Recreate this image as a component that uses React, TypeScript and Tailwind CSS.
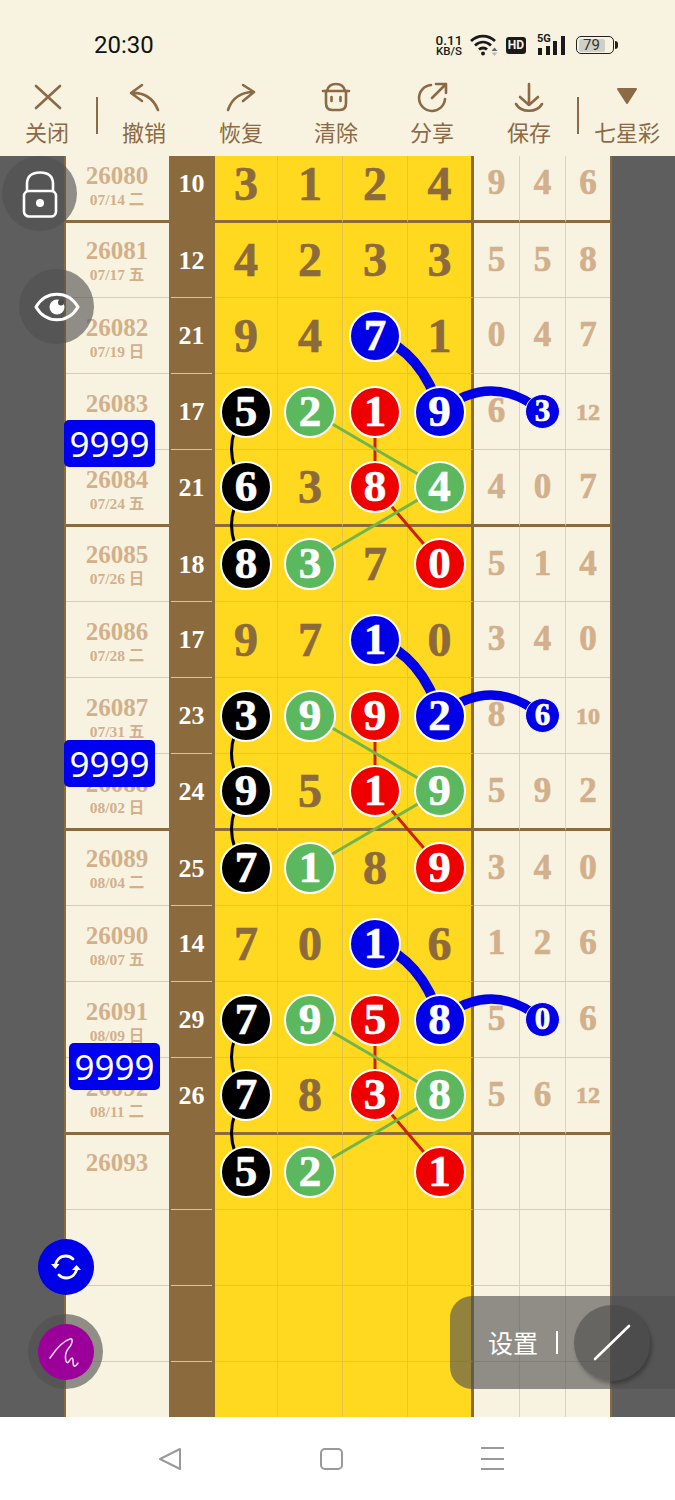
import React from "react";

type Cell = number | string | null;
type Row = { id: string; date: string; sum: string; main: Cell[]; side: Cell[] };

const rows: Row[] = [
  { id: "26080", date: "07/14 二", sum: "10", main: [3, 1, 2, 4], side: [9, 4, 6] },
  { id: "26081", date: "07/17 五", sum: "12", main: [4, 2, 3, 3], side: [5, 5, 8] },
  { id: "26082", date: "07/19 日", sum: "21", main: [9, 4, "b7", 1], side: [0, 4, 7] },
  { id: "26083", date: "", sum: "17", main: ["k5", "g2", "r1", "b9"], side: [6, "b3", 12] },
  { id: "26084", date: "07/24 五", sum: "21", main: ["k6", 3, "r8", "g4"], side: [4, 0, 7] },
  { id: "26085", date: "07/26 日", sum: "18", main: ["k8", "g3", 7, "r0"], side: [5, 1, 4] },
  { id: "26086", date: "07/28 二", sum: "17", main: [9, 7, "b1", 0], side: [3, 4, 0] },
  { id: "26087", date: "07/31 五", sum: "23", main: ["k3", "g9", "r9", "b2"], side: [8, "b6", 10] },
  { id: "26088", date: "08/02 日", sum: "24", main: ["k9", 5, "r1", "g9"], side: [5, 9, 2] },
  { id: "26089", date: "08/04 二", sum: "25", main: ["k7", "g1", 8, "r9"], side: [3, 4, 0] },
  { id: "26090", date: "08/07 五", sum: "14", main: [7, 0, "b1", 6], side: [1, 2, 6] },
  { id: "26091", date: "08/09 日", sum: "29", main: ["k7", "g9", "r5", "b8"], side: [5, "b0", 6] },
  { id: "26092", date: "08/11 二", sum: "26", main: ["k7", 8, "r3", "g8"], side: [5, 6, 12] },
  { id: "26093", date: "", sum: "", main: ["k5", "g2", null, "r1"], side: [null, null, null] },
  { id: "", date: "", sum: "", main: [null, null, null, null], side: [null, null, null] },
  { id: "", date: "", sum: "", main: [null, null, null, null], side: [null, null, null] },
  { id: "", date: "", sum: "", main: [null, null, null, null], side: [null, null, null] },
  { id: "", date: "", sum: "", main: [null, null, null, null], side: [null, null, null] },
];

const serif = "font-['Liberation_Serif','Noto_Sans_CJK_SC',serif] font-bold";
const heavy = "[-webkit-text-stroke:0.7px_currentColor]";

function ballColor(c: string) {
  if (c === "b") return "bg-[#0000e6]";
  if (c === "r") return "bg-[#ee0000]";
  if (c === "g") return "bg-[#5cb85f]";
  return "bg-black";
}

function Ball({ v, small }: { v: string; small?: boolean }) {
  return (
    <div
      className={`relative z-10 flex shrink-0 items-center justify-center rounded-full border-white text-white ${serif} ${heavy} ${ballColor(v[0])} ${
        small ? "h-[35px] w-[35px] border-[1.5px] text-[31px]" : "h-[52px] w-[52px] border-[2.5px] text-[45px]"
      }`}
    >
      {v.slice(1)}
    </div>
  );
}

function MainCell({ v, thick, last }: { v: Cell; thick: boolean; last: boolean }) {
  const bottom = thick ? "border-b-[3px] border-b-[#8b6a3d]" : "border-b border-b-[#e6c24a]";
  const right = last ? "border-r-[3px] border-r-[#8b6a3d]" : "border-r border-r-[#e6c24a]";
  return (
    <div className={`flex items-center justify-center bg-[#ffd820] text-[48px] text-[#8b6a3d] ${serif} ${heavy} ${bottom} ${right}`}>
      {typeof v === "string" ? <Ball v={v} /> : v}
    </div>
  );
}

function SideCell({ v, thick, last }: { v: Cell; thick: boolean; last: boolean }) {
  const big = typeof v === "number" && v > 9;
  const bottom = thick ? "border-b-[3px] border-b-[#8b6a3d]" : "border-b border-b-[#e0caa8]";
  return (
    <div
      className={`flex items-center justify-center bg-[#f8f3e0] text-[#d2b08c] ${serif} ${heavy} ${bottom} ${last ? "" : "border-r border-r-[#e3d0b4]"} ${
        big ? "text-[24px]" : "text-[35px]"
      }`}
    >
      {typeof v === "string" ? <Ball v={v} small /> : v}
    </div>
  );
}

function TableRow({ r, thick, h, pad }: { r: Row; thick: boolean; h: string; pad: string }) {
  const b = thick ? "border-b-[3px] border-b-[#8b6a3d]" : "border-b border-b-[#e0caa8]";
  return (
    <div className={`grid shrink-0 grid-cols-[103px_46px_63px_65px_65px_66px_46px_46px_44px] ${h}`}>
      <div className={`flex flex-col items-center bg-[#f8f3e0] pr-[1px] text-[#d2b08c] ${serif} ${b} ${pad}`}>
        <div className="text-[25px] leading-[28px]">{r.id}</div>
        <div className="text-[15.5px] leading-[20px]">{r.date}</div>
      </div>
      <div className="bg-[#8b6a3d] pl-[2px] pr-[3px]">
        <div
          className={`flex h-full items-center justify-center text-[26px] text-white ${serif} ${
            thick ? "pb-[3px]" : "border-b border-b-[#d8c3a3]"
          }`}
        >
          {r.sum}
        </div>
      </div>
      {r.main.map((v, i) => (
        <MainCell key={i} v={v} thick={thick} last={i === 3} />
      ))}
      {r.side.map((v, i) => (
        <SideCell key={i} v={v} thick={thick} last={i === 2} />
      ))}
    </div>
  );
}

function Links() {
  const groups = [0, 304, 608];
  return (
    <svg className="absolute left-0 top-0 z-[5] h-[1261px] w-[675px]" viewBox="0 156 675 1261" fill="none">
      {groups.map((o) => (
        <g key={o} transform={`translate(0 ${o})`}>
          <path d="M375 335Q422 352 440 411" stroke="#0000e6" strokeWidth="10" />
          <path d="M440 411Q492 371 541 411" stroke="#0000e6" strokeWidth="9" />
          <path d="M245 411Q218 449 245 487Q218 525 245 563" stroke="#000" strokeWidth="3" />
          <path d="M375 411V487L440 563" stroke="#cc2200" strokeWidth="3" />
          <path d="M310 411L440 487L310 563" stroke="#74b54a" strokeWidth="3" />
        </g>
      ))}
    </svg>
  );
}

const ic = "#8b6a45";

function ToolIcon({ name }: { name: string }) {
  const common = { width: 40, height: 40, viewBox: "0 0 40 40", fill: "none", stroke: ic, strokeWidth: 2.6, strokeLinecap: "round" as const, strokeLinejoin: "round" as const };
  if (name === "close")
    return (
      <svg {...common}>
        <path d="M9 9L33 31M33 9L9 31" />
      </svg>
    );
  if (name === "undo")
    return (
      <svg {...common}>
        <path d="M18 8L7 16L18 24M7 16C18 15 29 20 34 33" />
      </svg>
    );
  if (name === "redo")
    return (
      <svg {...common}>
        <path d="M22 8L33 15L22 24M7 33C11 21 20 15 33 15" />
      </svg>
    );
  if (name === "clear")
    return (
      <svg {...common}>
        <path d="M11 14C12 9 15 7 20 7C25 7 28 9 29 14" />
        <path d="M7 14H33" />
        <path d="M10 14V26C10 31 12 33 16 33H24C28 33 30 31 30 26V14" />
        <path d="M15.5 20V24M24.5 20V24" />
      </svg>
    );
  if (name === "share")
    return (
      <svg {...common}>
        <path d="M19 8A13 13 0 1 0 33 22" />
        <path d="M20 21L34 7M24 7H34V16" />
      </svg>
    );
  if (name === "save")
    return (
      <svg {...common}>
        <path d="M20 7V28M11 20L20 28L29 20" />
        <path d="M7 27C12 36 28 36 33 27" />
      </svg>
    );
  return (
    <svg width="40" height="40" viewBox="0 0 40 40">
      <path d="M11 12H29L20 26Z" fill={ic} stroke={ic} strokeWidth="2" strokeLinejoin="round" />
    </svg>
  );
}

function Tool({ name, label, w }: { name: string; label: string; w: string }) {
  return (
    <div className={`flex shrink-0 flex-col items-center ${w}`}>
      <ToolIcon name={name} />
      <div className="mt-[-1px] whitespace-nowrap text-[22px] leading-[30px] text-[#8b6a45]">{label}</div>
    </div>
  );
}

function Sep() {
  return <div className="mt-[20px] h-[37px] w-[2px] shrink-0 bg-[#8b6a45]" />;
}

function StatusBar() {
  return (
    <div className="flex h-[77px] items-center bg-[#f8f3e0] pl-[94px] pr-[57px] pt-[13px]">
      <div className="font-['Roboto',sans-serif] text-[24px] leading-[30px] text-[#111]">20:30</div>
      <div className="ml-auto flex items-center text-[#1a1a1a]">
        <div className="flex w-[26px] flex-col items-center font-['Roboto',sans-serif] font-medium">
          <span className="block text-[13.5px] leading-[12px]">0.11</span>
          <span className="block text-[11.5px] leading-[11px]">KB/S</span>
        </div>
        <svg className="ml-[8px]" width="28" height="22" viewBox="0 0 28 22" fill="none" stroke="#1a1a1a" strokeWidth="2.8">
          <path d="M1 7C8 0.5 18 0.5 25 7M5 11.5C10 7 16 7 21 11.5M9 15.5C11 13.5 15 13.5 17 15.5" />
          <circle cx="13" cy="19.5" r="2" fill="#1a1a1a" stroke="none" />
          <path d="M24.5 13.5L27.5 17H21.5Z" fill="#666" stroke="none" />
          <path d="M24.5 22L27.5 18.5H21.5Z" fill="#bbb" stroke="none" />
        </svg>
        <div className="ml-[8px] flex h-[17px] w-[20px] items-center justify-center rounded-[3px] bg-[#1a1a1a] font-['Roboto',sans-serif] text-[12px] font-bold leading-none text-[#f8f3e0]">
          HD
        </div>
        <div className="relative ml-[11px] flex h-[20px] w-[29px] items-end justify-between px-[1px]">
          <span className="absolute left-0 top-[-2px] font-['Roboto',sans-serif] text-[11px] font-bold leading-[11px]">5G</span>
          <i className="h-[7px] w-[4px] bg-[#1a1a1a]" />
          <i className="h-[9px] w-[4px] bg-[#1a1a1a]" />
          <i className="h-[14px] w-[4px] bg-[#1a1a1a]" />
          <i className="h-[19px] w-[4px] bg-[#1a1a1a]" />
        </div>
        <div className="ml-[10px] flex h-[18px] w-[38px] items-center rounded-[5px] border-[1.5px] border-[#222] p-[1.5px]">
          <div className="flex h-full w-[26px] items-center justify-center rounded-[2px] bg-[#d0cfc6] font-['Roboto',sans-serif] text-[15px] leading-none text-[#333]">
            79
          </div>
        </div>
        <div className="ml-[1px] h-[8px] w-[3px] rounded-r bg-[#222]" />
      </div>
    </div>
  );
}

function Toolbar() {
  return (
    <div className="flex h-[79px] items-start bg-[#f8f3e0] pl-[17px] font-['Noto_Sans_CJK_SC',sans-serif]">
      <Tool name="close" label="关闭" w="w-[60px]" />
      <div className="ml-[19px]">
        <Sep />
      </div>
      <div className="ml-[16px] flex">
        <Tool name="undo" label="撤销" w="w-[60px]" />
        <div className="w-[37px]" />
        <Tool name="redo" label="恢复" w="w-[60px]" />
        <div className="w-[35px]" />
        <Tool name="clear" label="清除" w="w-[60px]" />
        <div className="w-[36px]" />
        <Tool name="share" label="分享" w="w-[60px]" />
        <div className="w-[37px]" />
        <Tool name="save" label="保存" w="w-[60px]" />
      </div>
      <div className="ml-[18px]">
        <Sep />
      </div>
      <div className="ml-[14px]">
        <Tool name="tri" label="七星彩" w="w-[68px]" />
      </div>
    </div>
  );
}

function Badge({ className }: { className: string }) {
  return (
    <div
      className={`absolute z-20 flex h-[47px] w-[91px] items-center justify-center rounded-[5px] bg-[#0000f0] font-['Noto_Sans',sans-serif] text-[35px] leading-none text-white ${className}`}
    >
      9999
    </div>
  );
}

const glass = "bg-[rgba(80,80,80,0.63)]";

function Overlays() {
  return (
    <>
      <div className={`absolute left-[2px] top-[156px] z-30 flex h-[75px] w-[75px] items-center justify-center rounded-full ${glass}`}>
        <svg width="36" height="48" viewBox="0 0 36 48" fill="none" stroke="#fff" strokeWidth="2.6">
          <path d="M5 21V14C5 6 10 2.5 18 2.5C26 2.5 31 6 31 14V21" />
          <rect x="2" y="21" width="32" height="25.5" rx="5" />
          <circle cx="18" cy="33" r="4" fill="#fff" stroke="none" />
        </svg>
      </div>
      <div className={`absolute left-[19px] top-[269px] z-30 flex h-[75px] w-[75px] items-center justify-center rounded-full ${glass}`}>
        <svg width="46" height="32" viewBox="0 0 46 32" fill="none" stroke="#fff" strokeWidth="3">
          <path d="M2 16C12 -1 34 -1 44 16C34 33 12 33 2 16Z" />
          <circle cx="23" cy="16" r="7.5" fill="#fff" stroke="none" />
          <circle cx="27" cy="11.5" r="3" fill="#4a4a4a" stroke="none" />
        </svg>
      </div>
      <div className="absolute left-[38px] top-[1239px] z-30 flex h-[56px] w-[56px] items-center justify-center rounded-full bg-[#0000e6]">
        <svg width="32" height="28" viewBox="0 0 32 28" fill="none" stroke="#fff" strokeWidth="2.8" strokeLinecap="round">
          <path d="M5 13C6 7 10 3 16 3C19 3 21 4 23 6" />
          <path d="M27 15C26 21 22 25 16 25C13 25 11 24 9 22" />
          <path d="M1 11L5.5 16L9.5 11Z" fill="#fff" stroke="none" />
          <path d="M22 17L26.5 12L31 17Z" fill="#fff" stroke="none" />
        </svg>
      </div>
      <div className={`absolute left-[28px] top-[1314px] z-30 flex h-[75px] w-[75px] items-center justify-center rounded-full ${glass}`}>
        <div className="flex h-[56px] w-[56px] items-center justify-center rounded-full bg-[#9b009b]">
          <svg width="38" height="38" viewBox="0 0 38 38" fill="none" stroke="#f6d9f6" strokeWidth="1.6" strokeLinecap="round" strokeLinejoin="round">
            <path d="M3 25C9 16 16 8 23 6C27 5 25 12 21 16C18 20 18 24 19 28C21 33 23 25 25 25C27 25 25 31 27 33C29 34 30 31 31 30" />
          </svg>
        </div>
      </div>
      <div className={`absolute left-[450px] top-[1296px] z-30 flex h-[93px] w-[225px] items-center rounded-l-[22px] ${glass}`}>
        <div className="ml-[38px] font-['Noto_Sans_CJK_SC',sans-serif] text-[25px] leading-none text-white">设置</div>
        <div className="ml-[18px] h-[23px] w-[2px] bg-white" />
        <div className="ml-[16px] flex h-[76px] w-[76px] items-center justify-center rounded-full bg-[rgba(70,70,70,0.55)] shadow-[2px_3px_4px_rgba(0,0,0,0.3)]">
          <svg width="40" height="38" viewBox="0 0 40 38" fill="none" stroke="#fff" strokeWidth="2.6" strokeLinecap="round">
            <path d="M3 35L37 2" />
          </svg>
        </div>
      </div>
    </>
  );
}

function NavBar() {
  return (
    <div className="flex h-[83px] items-start bg-white pt-[30px]">
      <svg className="ml-[158px]" width="24" height="24" viewBox="0 0 24 24" fill="none" stroke="#999" strokeWidth="2" strokeLinejoin="round">
        <path d="M22 2L2 12L22 22Z" />
      </svg>
      <div className="ml-[138px] mt-[1px] h-[22px] w-[23px] rounded-[5px] border-2 border-[#999]" />
      <div className="ml-[138px] flex h-[23px] w-[23px] flex-col justify-between">
        <div className="h-[2px] bg-[#999]" />
        <div className="h-[2px] bg-[#999]" />
        <div className="h-[2px] bg-[#999]" />
      </div>
    </div>
  );
}

export default function App() {
  const height = (i: number) => {
    if (i === 0) return "h-[76px]";
    if ((i - 1) % 4 === 0) return "h-[75px]";
    if (i % 4 === 0) return "h-[77px]";
    return "h-[76px]";
  };
  const pad = (i: number) => {
    if (i === 0) return "pt-[15px]";
    if ((i - 1) % 4 === 0) return "pt-[14px]";
    return "pt-[16px]";
  };
  return (
    <div className="relative h-[1500px] w-[675px] overflow-hidden bg-[#f8f3e0]">
      <StatusBar />
      <Toolbar />
      <div className="relative flex h-[1261px] overflow-hidden bg-[#5e5e5e]">
        <div className="w-[66px] shrink-0 border-r-2 border-r-[#8b6a3d]" />
        <div className="mt-[-9px] flex w-[544px] shrink-0 flex-col">
          {rows.map((r, i) => (
            <TableRow key={i} r={r} thick={i === 0 || (i % 4 === 0 && i < 13)} h={height(i)} pad={pad(i)} />
          ))}
        </div>
        <div className="flex-1 border-l-2 border-l-[#8b6a3d]" />
        <Links />
      </div>
      <Badge className="left-[64px] top-[420px]" />
      <Badge className="left-[64px] top-[740px]" />
      <Badge className="left-[69px] top-[1043px]" />
      <Overlays />
      <NavBar />
    </div>
  );
}
